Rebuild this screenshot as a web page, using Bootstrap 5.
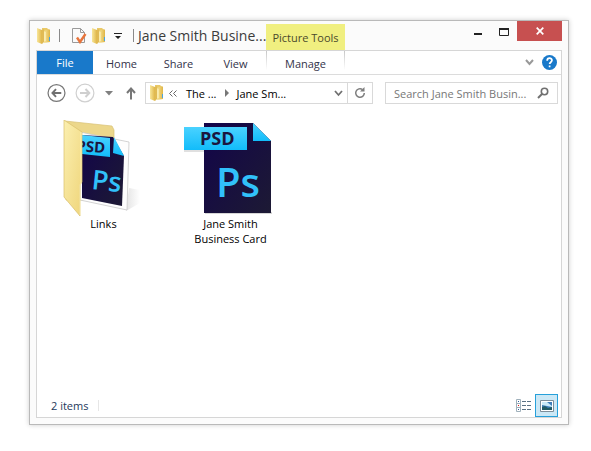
<!DOCTYPE html>
<html lang="en">
<head>
<meta charset="utf-8">
<meta name="viewport" content="width=device-width, initial-scale=1">
<title>Jane Smith Business Card</title>
<link href="https://cdn.jsdelivr.net/npm/bootstrap@5.3.0/dist/css/bootstrap.min.css" rel="stylesheet">
<style>
body{font-family:"Open Sans","Noto Sans",sans-serif;font-size:11px;line-height:15px;color:#000;background:#fff}
.desk{padding:20px 22px 26px 29px}
.win{background:#fbfbfb;border:1px solid #b9b9b9;box-shadow:0 0 5px rgba(0,0,0,.2);padding:0 6px 6px}
.titlebar{height:29px}
.plain{border:0;background:transparent;padding:0;display:flex;align-items:center;justify-content:center;flex:none}
svg{display:block;flex:none}
.quick{width:102px;padding-left:1px}
.sep{width:1px;height:13px;background:#8a8a8a;flex:none}
.wtitle{font-size:14px;line-height:22px;color:#3b3b3b;font-weight:400;width:128px}
.ctx{width:79px;height:26px;background:#f0ef80;color:#4b4a2c;align-self:flex-end}
.close-x{width:45px;height:20px;background:#c75050}
.winbtn{width:26px;height:22px}
.pane{background:#fff;border:1px solid #d6d6d6}
.ribbon{height:24px;border-bottom:1px solid #dcdcdc}
.tab{width:57px;height:23px;color:#33334a;padding-top:2px}
.tab.file{width:56px;background:#1979ca;color:#fff;padding:0}
.tab.manage{width:79px;margin-left:2px;border:solid;border-width:0 1px;border-image:linear-gradient(#c4c4c4,#fff 80%) 1}
.navrow{padding:7px 3px 0 10px}
.box{height:22px;border:1px solid #d9d9d9;background:#fff}
.addr{flex:228 1 228px}
.find{flex:173 1 173px;margin-left:12px}
.find input{border:0;outline:0;padding:0 0 0 8px;background:transparent;color:#6d6d6d;width:100%;min-width:0;text-overflow:ellipsis}
.find input::placeholder{color:#777;opacity:1}
.refresh{width:25px;border-left:1px solid #d9d9d9!important}
.crumb{color:#000;text-decoration:none;white-space:nowrap}
.files{padding:16px 3px}
.item{width:127px;color:#000;text-decoration:none}
.status{height:23px;padding:0 3px 0 14px;color:#1e395b}
.status .sep{height:11px;background:#e6e6e6;margin-left:10px}
.view{width:23px;height:23px}
.view.on{border:1px solid #26a0da;background:#cbe8f6}
.glyph{font-family:"Open Sans",sans-serif}
</style>
<script src="https://cdn.jsdelivr.net/npm/bootstrap@5.3.0/dist/js/bootstrap.bundle.min.js"></script>
</head>
<body>
<svg width="0" height="0" class="position-absolute" aria-hidden="true">
<defs>
<linearGradient id="gold"><stop offset="0" stop-color="#f8e69a"/><stop offset="1" stop-color="#dfb547"/></linearGradient>
<linearGradient id="cyan" x2="0" y2="1"><stop offset="0" stop-color="#4ad2ff"/><stop offset="1" stop-color="#12bcfa"/></linearGradient>
<linearGradient id="night" x2="1" y2="1"><stop offset="0" stop-color="#12044a"/><stop offset="1" stop-color="#1d1a34"/></linearGradient>
<linearGradient id="flap" x2="1" y2="1"><stop offset="0" stop-color="#fbefb0"/><stop offset="1" stop-color="#efd57a"/></linearGradient>
<linearGradient id="shade"><stop offset="0" stop-color="#e4e4e4"/><stop offset="1" stop-color="#fff"/></linearGradient>
<clipPath id="sheet"><path d="M26 15l31 2 11 19-2 50-40-8z"/></clipPath>
<symbol id="folder" viewBox="0 0 14 18">
<path d="M5 1h5l1 1v13H5z" fill="#e9c968"/>
<path d="M0 1l5 2v14l-5-2z" fill="url(#gold)"/><path d="M5 3l2-1v13l-2 2z" fill="#e0ba55"/>
<path d="M7 4l5-2 1 1v12l-6 1z" fill="url(#gold)"/><path d="M12 10h1v4h-1z" fill="#4aa3dd"/><path d="M8 5v9" stroke="#fff6c9"/>
</symbol>
</defs>
</svg>
<div class="desk min-vh-100 d-flex">
<main class="win flex-grow-1 d-flex flex-column">
 <header class="titlebar d-flex">
  <div class="quick d-flex align-items-center flex-shrink-0">
   <svg width="14" height="18"><use href="#folder"/></svg>
   <span class="sep ms-2"></span>
   <button class="plain ms-2 ps-1" aria-label="Properties"><svg width="16" height="17" viewBox="0 0 16 17"><path d="M.5 1.500h8l4 4v10H.5z" fill="#fafafa" stroke="#9a9a9a"/><path d="M8.500 1.500v4h4" fill="none" stroke="#9a9a9a"/><path d="M5 10.500l3 4.500 5.500-8" fill="none" stroke="#e8743b" stroke-width="2.400"/></svg></button>
   <button class="plain ms-1" aria-label="New folder"><svg width="14" height="18"><use href="#folder"/></svg></button>
   <button class="plain ms-2" aria-label="Customize toolbar"><svg width="8" height="9" viewBox="0 0 8 9"><path d="M0 2h8v1H0zM1 5h6L4 8z" fill="#222"/></svg></button>
   <span class="sep ms-auto me-1"></span>
  </div>
  <h1 class="wtitle text-nowrap m-0 pt-1 flex-shrink-0">Jane Smith Busine...</h1>
  <div class="ctx d-flex align-items-center justify-content-center flex-shrink-0">Picture Tools</div>
  <div class="d-flex ms-auto">
   <button class="plain winbtn" aria-label="Minimize"><svg width="9" height="9"><path d="M0 5h8v2H0z" fill="#222"/></svg></button>
   <button class="plain winbtn" aria-label="Maximize"><svg width="10" height="8"><path d="M.5 0v7.500h9V0" fill="none" stroke="#222"/><path d="M0 0h10v2H0z" fill="#222"/></svg></button>
   <button class="plain close-x" aria-label="Close"><svg width="8" height="8" viewBox="0 0 8 8"><path d="M.7.7l6.600 6.600M7.300.7L.7 7.300" stroke="#fff" stroke-width="1.700"/></svg></button>
  </div>
 </header>
 <section class="pane flex-grow-1 d-flex flex-column">
  <nav class="ribbon d-flex" aria-label="Ribbon">
   <button class="plain tab file">File</button><button class="plain tab">Home</button><button class="plain tab">Share</button><button class="plain tab">View</button><button class="plain tab manage">Manage</button>
   <div class="ms-auto d-flex align-items-center gap-2 pe-1">
    <button class="plain" aria-label="Expand ribbon"><svg width="9" height="7"><path d="M1 1l3.500 4L8 1" fill="none" stroke="#999" stroke-width="2"/></svg></button>
    <button class="plain" aria-label="Help"><svg width="15" height="15" viewBox="0 0 14 14"><circle cx="7" cy="7" r="7" fill="#1979ca"/><path d="M4.800 5.300C4.800 2.200 9.300 2.300 9.300 5c0 1.700-2.200 1.800-2.200 3.500M7.100 9.800v1.600" fill="none" stroke="#fff" stroke-width="1.600"/></svg></button>
   </div>
  </nav>
  <div class="navrow d-flex align-items-center">
   <button class="plain" aria-label="Back"><svg width="19" height="20" viewBox="0 0 20 20"><circle cx="10" cy="10" r="8.900" fill="#fff" stroke="#777" stroke-width="1.300"/><path d="M15 10H6M9.500 6L5.700 10l3.800 4" fill="none" stroke="#707070" stroke-width="2"/></svg></button>
   <button class="plain" aria-label="Forward"><svg class="mx-2" width="23" height="20" viewBox="-1 0 23 20"><circle cx="10" cy="10" r="8.900" fill="#fff" stroke="#d0d0d0" stroke-width="1.200"/><path d="M5 10h9M10.500 6l3.800 4-3.800 4" fill="none" stroke="#cfcfcf" stroke-width="2"/></svg></button>
   <button class="plain" aria-label="Recent locations"><svg width="8" height="5"><path d="M0 0h8L4 4.500z" fill="#808080"/></svg></button>
   <button class="plain ms-2 ps-1 me-2" aria-label="Up"><svg width="12" height="13" viewBox="0 0 12 13"><path d="M6 12.500V2M2 6l4-4.500L10 6" fill="none" stroke="#777" stroke-width="2"/></svg></button>
   <div class="box addr d-flex align-items-stretch" role="group" aria-label="Address">
    <div class="d-flex align-items-center flex-grow-1 ps-1 pe-1">
     <svg width="14" height="18"><use href="#folder"/></svg>
     <svg class="ms-1" width="10" height="7"><path d="M4.500.5l-3 3 3 3M8.500.5l-3 3 3 3" fill="none" stroke="#666"/></svg>
     <a class="crumb ms-2" href="#">The ...</a>
     <svg class="mx-2" width="4" height="8"><path d="M0 0l4 4-4 4z" fill="#777"/></svg>
     <a class="crumb" href="#">Jane Sm...</a>
     <button class="plain ms-auto" aria-label="Previous locations"><svg width="9" height="7"><path d="M1 1l3.500 4L8 1" fill="none" stroke="#707070" stroke-width="1.800"/></svg></button>
    </div>
    <button class="plain refresh" aria-label="Refresh"><svg width="12" height="12" viewBox="0 0 12 12"><path d="M8.500 2.500A4.300 4.300 0 1 0 10.300 6" fill="none" stroke="#7d7d7d" stroke-width="1.500"/><path d="M6 4.500h4.500V0z" fill="#7d7d7d"/></svg></button>
   </div>
   <label class="box find d-flex align-items-center pe-2"><input type="text" aria-label="Search" placeholder="Search Jane Smith Busin..."><svg width="12" height="12" viewBox="0 0 12 12"><circle cx="7.500" cy="4.500" r="3.200" fill="none" stroke="#707070" stroke-width="1.600"/><path d="M5 7L1 11" stroke="#707070" stroke-width="2"/></svg></label>
  </div>
  <div class="files d-flex flex-grow-1 align-items-start">
   <a class="item text-center" href="#">
    <svg class="mx-auto" width="96" height="96" viewBox="0 0 96 96" aria-hidden="true">
     <path d="M70 91l14-8V70l-11-2z" fill="url(#shade)"/>
     <path d="M9 1l47 5 2 4v70H10z" fill="#ecd78b" stroke="#d9c277" stroke-width=".7"/>
     <path d="M24 12l49 10-2 68-47-10z" fill="#fdfdfd" stroke="#c8c8c8" stroke-width=".8"/>
     <path d="M26 15l31 2 11 19-2 50-40-8z" fill="url(#night)"/>
     <path d="M26 15l28 3v19l-28-3z" fill="url(#cyan)"/>
     <path d="M58 17l10 19-11-3z" fill="url(#cyan)"/>
     <g clip-path="url(#sheet)">
     <text class="glyph" x="20" y="31" transform="rotate(4 20 31)" font-size="15" font-weight="700" fill="#1b1540">PSD</text>
     <text class="glyph" x="35" y="69" transform="rotate(6 35 69)" font-size="27" font-weight="600" fill="#31c1fa">Ps</text>
     </g>
     <path d="M8 0l18 12v50l-2 3v31L8 77z" fill="url(#flap)" stroke="#d8bf6c" stroke-width=".7"/>
     <path d="M25 12v51l-1 2v30" fill="none" stroke="#fff4bd" stroke-width=".8"/>
    </svg>Links</a>
   <a class="item text-center" href="#">
    <svg class="mx-auto" width="96" height="96" viewBox="0 0 96 96" aria-hidden="true">
     <path d="M22 93h67" stroke="#bbb" stroke-width="2" opacity=".6"/><path d="M1 31h20" stroke="#999" opacity=".6"/>
     <path d="M21 3h49l18 18v72H21z" fill="url(#night)"/>
     <path d="M70 3l18 18H70z" fill="url(#cyan)"/>
     <path d="M1 7h63v23H1z" fill="url(#cyan)"/>
     <text class="glyph" x="17" y="25" font-size="18" font-weight="700" fill="#1b1540">PSD</text>
     <text class="glyph" x="33" y="77" font-size="40" font-weight="600" fill="#31c1fa">Ps</text>
    </svg>Jane Smith<br>Business Card</a>
  </div>
  <footer class="status d-flex align-items-center">
   <span>2 items</span><span class="sep"></span>
   <button class="plain view ms-auto" aria-label="Details view"><svg width="16" height="14" viewBox="0 0 16 14"><g fill="#fff" stroke="#9fb0bb"><path d="M.5.5h4v4h-4zM.5 4.500h4v4h-4zM.5 8.500h4v4h-4z"/></g><path d="M2 2h1v1H2zM2 10h1v1H2z" fill="#2c5e9c"/><path d="M2 6h1v1H2z" fill="#d11"/><path d="M6 2.500h4m1 0h4M6 6.500h4m1 0h4M6 10.500h4m1 0h4" stroke="#5a7184"/></svg></button>
   <button class="plain view on" aria-label="Large icons view"><svg width="14" height="12" viewBox="0 0 14 12"><path d="M.5.5h13v11H.5z" fill="#fff" stroke="#7c8d99"/><path d="M2 2h10v8H2z" fill="#3c7cb8"/><path d="M2 2h5l5 4v1L2 5z" fill="#c9e8f6"/><path d="M2 10V7l3-1 3 2 4-1v3z" fill="#215a63"/></svg></button>
  </footer>
 </section>
</main>
</div>
</body>
</html>
